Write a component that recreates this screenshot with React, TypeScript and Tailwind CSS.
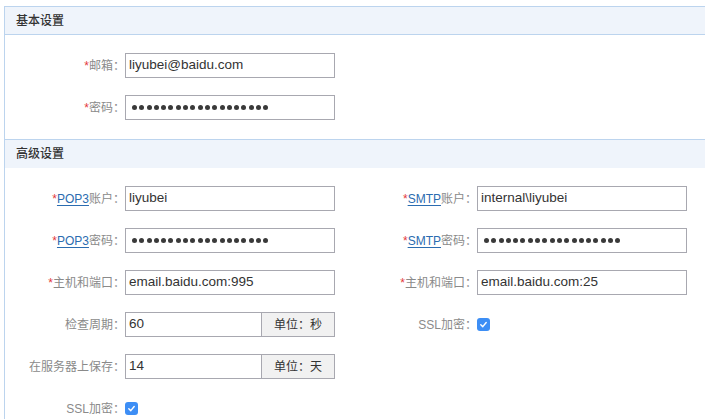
const font = "font-['Liberation_Sans','Noto_Sans_CJK_SC',sans-serif]";

function Dots({ n }: { n: number }) {
  return (
    <div className="flex items-center gap-[2.3px] pl-[6px]">
      {Array.from({ length: n }).map((_, i) => (
        <span key={i} className="block w-[5px] h-[5px] rounded-full bg-[#3a3a3a]" />
      ))}
    </div>
  );
}

function Label({
  required,
  link,
  text,
}: {
  required?: boolean;
  link?: string;
  text: string;
}) {
  return (
    <div className="w-[120px] shrink-0 text-right text-[12px] text-[#8a8a8a] whitespace-nowrap">
      {required && <span className="text-[#e4393c]">*</span>}
      {link && <a className="text-[#2b6cb0] underline underline-offset-2">{link}</a>}
      {text}：
    </div>
  );
}

function TextBox({ value }: { value: string }) {
  return (
    <div className="w-[210px] h-[25px] border border-[#a8a8b0] bg-white flex items-center pl-[3px] text-[13.5px] text-[#333]">
      {value}
    </div>
  );
}

function PasswordBox() {
  return (
    <div className="w-[210px] h-[25px] border border-[#a8a8b0] bg-white flex items-center">
      <Dots n={19} />
    </div>
  );
}

function UnitBox({ value, unit }: { value: string; unit: string }) {
  return (
    <div className="w-[210px] h-[25px] border border-[#a8a8b0] bg-white flex">
      <div className="flex-1 flex items-center pl-[3px] text-[13.5px] text-[#333]">{value}</div>
      <div className="w-[73px] border-l border-[#a8a8b0] bg-[#f1f1f1] flex items-center justify-center text-[12px] text-[#333]">
        {unit}
      </div>
    </div>
  );
}

function Check() {
  return (
    <div className="w-[13px] h-[13px] rounded-[3px] bg-[#3d8ef5] flex items-center justify-center">
      <svg width="9" height="9" viewBox="0 0 10 10">
        <path d="M2 5.3 L4.2 7.4 L8 2.8" fill="none" stroke="white" strokeWidth="1.6" strokeLinecap="round" strokeLinejoin="round" />
      </svg>
    </div>
  );
}

function Row({ label, children }: { label: React.ReactNode; children: React.ReactNode }) {
  return (
    <div className="flex items-center h-[25px]">
      {label}
      {children}
    </div>
  );
}

function Header({ title, bordered }: { title: string; bordered?: boolean }) {
  return (
    <div
      className={`h-[28px] bg-[#eff4fb] flex items-center pl-[11px] text-[12px] font-medium text-[#333] ${
        bordered ? "border-b border-[#bcd4ee]" : ""
      }`}
    >
      {title}
    </div>
  );
}

export default function App() {
  return (
    <div className={`w-[705px] h-[419px] overflow-hidden bg-white pt-[6px] pl-[4px] ${font}`}>
      <div className="border-l border-[#bcd4ee]">
        <section className="border-t border-[#bcd4ee]">
          <Header title="基本设置" bordered />
          <div className="pt-[18px] pb-[19px] flex flex-col gap-[17px]">
            <Row label={<Label required text="邮箱" />}>
              <TextBox value="liyubei@baidu.com" />
            </Row>
            <Row label={<Label required text="密码" />}>
              <PasswordBox />
            </Row>
          </div>
        </section>

        <section className="border-t border-[#bcd4ee]">
          <Header title="高级设置" />
          <div className="pt-[18px] pb-[20px] flex gap-[22px]">
            <div className="flex flex-col gap-[17px]">
              <Row label={<Label required link="POP3" text="账户" />}>
                <TextBox value="liyubei" />
              </Row>
              <Row label={<Label required link="POP3" text="密码" />}>
                <PasswordBox />
              </Row>
              <Row label={<Label required text="主机和端口" />}>
                <TextBox value="email.baidu.com:995" />
              </Row>
              <Row label={<Label text="检查周期" />}>
                <UnitBox value="60" unit="单位：秒" />
              </Row>
              <Row label={<Label text="在服务器上保存" />}>
                <UnitBox value="14" unit="单位：天" />
              </Row>
              <Row label={<Label text="SSL加密" />}>
                <Check />
              </Row>
            </div>
            <div className="flex flex-col gap-[17px]">
              <Row label={<Label required link="SMTP" text="账户" />}>
                <TextBox value="internal\liyubei" />
              </Row>
              <Row label={<Label required link="SMTP" text="密码" />}>
                <PasswordBox />
              </Row>
              <Row label={<Label required text="主机和端口" />}>
                <TextBox value="email.baidu.com:25" />
              </Row>
              <Row label={<Label text="SSL加密" />}>
                <Check />
              </Row>
            </div>
          </div>
        </section>
      </div>
    </div>
  );
}
